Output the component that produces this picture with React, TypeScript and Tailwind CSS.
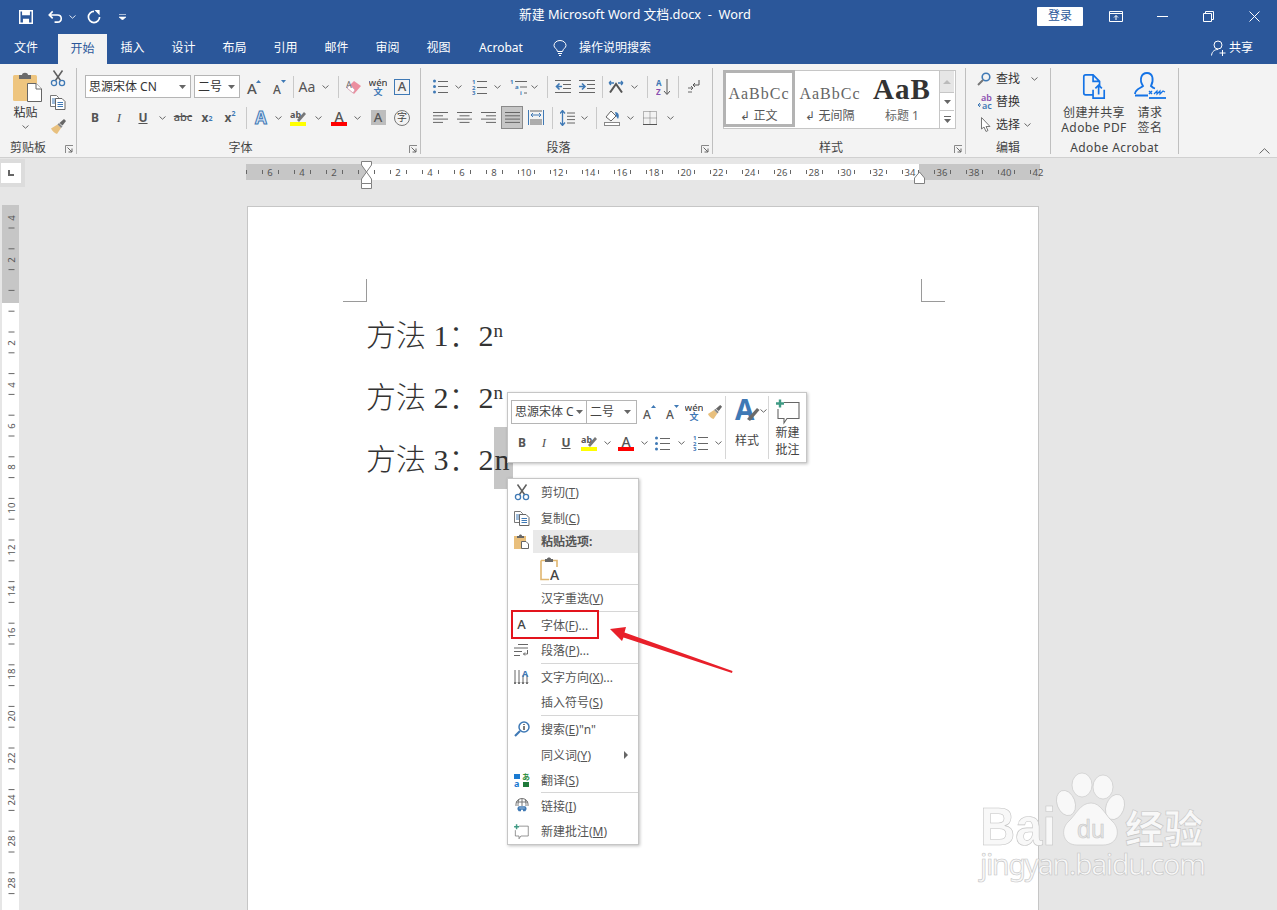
import type { ReactNode } from "react";

const GRAY = "#5f5f5f";
const BLUE = "#3f79b5";

function S({ c, children }: { c: string; children?: ReactNode }) {
  return <div className={`flex h-full shrink-0 items-center justify-center ${c}`}>{children}</div>;
}

function Sep({ c = "" }: { c?: string }) {
  return <div className={`h-[22px] w-px shrink-0 bg-[#c9c9c9] ${c}`} />;
}

function Chev({ color = "#666" }: { color?: string }) {
  return (
    <svg width="7" height="4" viewBox="0 0 7 4" className="shrink-0">
      <path d="M0.5 0.5 L3.5 3.2 L6.5 0.5" fill="none" stroke={color} />
    </svg>
  );
}

function Caret() {
  return (
    <svg width="7" height="4" viewBox="0 0 7 4" className="shrink-0">
      <path d="M0 0 H7 L3.5 4 Z" fill="#666" />
    </svg>
  );
}

function FontBox({ c, label }: { c: string; label: string }) {
  return (
    <div className={`flex shrink-0 items-center justify-between overflow-hidden border border-[#b5b5b5] bg-white pl-[3px] pr-[4px] text-[12px] text-[#333] ${c}`}>
      <span className="overflow-hidden whitespace-nowrap">{label}</span>
      <Caret />
    </div>
  );
}

function Scissors() {
  return (
    <svg width="16" height="17" viewBox="0 0 16 17" className="shrink-0">
      <path d="M3.5 0.5 L10.5 10.5 M12.5 0.5 L5.5 10.5" stroke={GRAY} strokeWidth="1.5" fill="none" />
      <circle cx="4" cy="13" r="2.6" fill="none" stroke={BLUE} strokeWidth="1.3" />
      <circle cx="12" cy="13" r="2.6" fill="none" stroke={BLUE} strokeWidth="1.3" />
    </svg>
  );
}

function CopyIcon() {
  return (
    <svg width="16" height="15" viewBox="0 0 16 15" className="shrink-0">
      <path d="M0.5 0.5 H6.5 L8.5 2.5 V11.5 H0.5 Z" fill="#fff" stroke="#777" />
      <path d="M2 4 H6 M2 6 H5 M2 8 H5" stroke={BLUE} />
      <path d="M5.5 3.5 H12 L15 6.5 V14.5 H5.5 Z" fill="#fff" stroke="#666" />
      <path d="M7.5 7.5 H13 M7.5 9.5 H13 M7.5 11.5 H13" stroke={BLUE} />
    </svg>
  );
}

function Brush({ size = 17 }: { size?: number }) {
  return (
    <svg width={size} height={size} viewBox="0 0 17 17" className="shrink-0">
      <path d="M1 10.5 L7.5 6.5 L11 10 L7 16 C5 15.5 2 13 1 10.5 Z" fill="#e8c07e" />
      <path d="M7.5 6.5 L9 5 L12.5 8.5 L11 10 Z" fill="#888" />
      <path d="M9.5 5 L14 1 L16 3 L12.5 7.5 Z" fill="#666" />
    </svg>
  );
}

function PasteBig() {
  return (
    <svg width="29" height="30" viewBox="0 0 29 30" className="ml-[3px] shrink-0">
      <rect x="0" y="3" width="24" height="26" rx="1.5" fill="#eec57f" />
      <path d="M6 3 H9 C9 0 15 0 15 3 H18 V7 H6 Z" fill="#6b6b6b" />
      <path d="M14.5 11.5 H23 L28.5 17 V29.5 H14.5 Z" fill="#fff" stroke="#666" />
      <path d="M23 11.5 V17 H28.5" fill="#fff" stroke="#666" />
    </svg>
  );
}

function WenIcon() {
  return (
    <svg width="18" height="18" viewBox="0 0 18 18" className="shrink-0">
      <text x="9" y="7.5" textAnchor="middle" fontSize="9.5" fontWeight="500" fill="#444" fontFamily="Noto Sans">wén</text>
      <text x="9" y="17" textAnchor="middle" fontSize="9" fontWeight="700" fill={BLUE} fontFamily="Noto Sans CJK SC">文</text>
    </svg>
  );
}

function GrowA({ up, big }: { up: boolean; big: boolean }) {
  return (
    <svg width="16" height="16" viewBox="0 0 16 16" className="shrink-0">
      <text x="6" y="15" textAnchor="middle" fontSize={big ? 15 : 12} fontWeight="500" fill="#555" fontFamily="Noto Sans">A</text>
      <path d={up ? "M10 4 L12.5 1 L15 4 Z" : "M10 1 H15 L12.5 4 Z"} fill={BLUE} />
    </svg>
  );
}

function Highlight() {
  return (
    <svg width="17" height="16" viewBox="0 0 17 16" className="shrink-0">
      <text x="0" y="8" fontSize="9" fontWeight="700" fill="#555" fontFamily="Noto Sans">ab</text>
      <path d="M7 10 L14 2 L16 4 L9 12 Z" fill="#777" />
      <rect x="0" y="12" width="16" height="4" fill="#ffff00" />
    </svg>
  );
}

function FontColor() {
  return (
    <svg width="16" height="16" viewBox="0 0 16 16" className="shrink-0">
      <text x="8" y="12" textAnchor="middle" fontSize="14" fontWeight="500" fill="#555" fontFamily="Noto Sans">A</text>
      <rect x="0" y="12" width="16" height="4" fill="#ff0000" />
    </svg>
  );
}

function Lines({ rows, x = 0, w = 15 }: { rows: number[]; x?: number; w?: number }) {
  return <path d={rows.map((y) => `M${x} ${y} H${x + w}`).join(" ")} stroke="#666" />;
}

function Bullets() {
  return (
    <svg width="15" height="15" viewBox="0 0 15 15" className="shrink-0">
      <circle cx="1.5" cy="2" r="1.5" fill={BLUE} />
      <circle cx="1.5" cy="7.5" r="1.5" fill={BLUE} />
      <circle cx="1.5" cy="13" r="1.5" fill={BLUE} />
      <Lines rows={[2.5, 7.5, 13.5]} x={5} w={10} />
    </svg>
  );
}

function Numbers() {
  return (
    <svg width="15" height="16" viewBox="0 0 15 16" className="shrink-0">
      <text x="0" y="5" fontSize="6" fontWeight="700" fill={BLUE} fontFamily="Noto Sans">1</text>
      <text x="0" y="10.5" fontSize="6" fontWeight="700" fill={BLUE} fontFamily="Noto Sans">2</text>
      <text x="0" y="16" fontSize="6" fontWeight="700" fill={BLUE} fontFamily="Noto Sans">3</text>
      <Lines rows={[2.5, 8.5, 14.5]} x={5} w={10} />
    </svg>
  );
}

function MultiLevel() {
  return (
    <svg width="17" height="16" viewBox="0 0 17 16" className="shrink-0">
      <text x="0" y="5" fontSize="6" fontWeight="700" fill={BLUE} fontFamily="Noto Sans">1</text>
      <text x="5" y="10" fontSize="6" fontWeight="700" fill={BLUE} fontFamily="Noto Sans">a</text>
      <text x="10" y="16" fontSize="6" fontWeight="700" fill={BLUE} fontFamily="Noto Sans">i</text>
      <path d="M5 2.5 H17 M10 8 H17 M14 14 H17" stroke="#666" />
    </svg>
  );
}

function Indent({ rtl }: { rtl: boolean }) {
  return (
    <svg width="16" height="13" viewBox="0 0 16 13" className="shrink-0">
      <path d="M0 0.5 H16 M8 4.5 H16 M8 8.5 H16 M0 12.5 H16" stroke="#666" />
      <path d={rtl ? "M7 6.5 H2 M4.5 3.5 L1.5 6.5 L4.5 9.5" : "M0 6.5 H5 M3 3.5 L6 6.5 L3 9.5"} stroke={BLUE} strokeWidth="1.6" fill="none" />
    </svg>
  );
}

function Align({ rows }: { rows: [number, number][] }) {
  return (
    <svg width="15" height="11" viewBox="0 0 15 11" className="shrink-0">
      {rows.map(([x, w], i) => (
        <path key={i} d={`M${x} ${i * 3.3 + 0.5} H${x + w}`} stroke="#666" />
      ))}
    </svg>
  );
}

function Comment({ w = 24, h = 26 }: { w?: number; h?: number }) {
  return (
    <svg width={w} height={h} viewBox="0 0 24 26" className="shrink-0">
      <path d="M8 3.5 H23 V19.5 H11 L8 24 V19.5 H2 V10" fill="none" stroke="#666" strokeWidth="1.1" />
      <path d="M0 4.5 H8 M4 0.5 V8.5" stroke="#3f9a84" strokeWidth="2.4" />
    </svg>
  );
}

function Launcher() {
  return (
    <svg width="8" height="8" viewBox="0 0 8 8" className="absolute bottom-[1px] right-[3px]">
      <path d="M0.5 8 V0.5 H8" fill="none" stroke="#888" />
      <path d="M2.5 2.5 L7 7 M7 3.5 V7 H3.5" fill="none" stroke="#666" />
    </svg>
  );
}

function Group({ c, label, launcher, children, labelPad = "pr-[16px]" }: { c: string; label: string; launcher?: boolean; children: ReactNode; labelPad?: string }) {
  return (
    <div className={`relative mt-1 h-[86px] shrink-0 border-r border-[#bfbfbf] ${c}`}>
      <div className="flow-root h-[71px]">{children}</div>
      <div className={`mt-px h-[15px] whitespace-nowrap text-center text-[12px] leading-[15px] text-[#444] ${labelPad}`}>{label}</div>
      {launcher && <Launcher />}
    </div>
  );
}

function TitleBar() {
  return (
    <div className="flex h-8 items-center text-white">
      <div className="flex w-[519px] shrink-0 items-center pt-[2px]">
        <svg width="14" height="14" viewBox="0 0 16 16" className="ml-[19px] shrink-0">
          <path d="M0.8 0.8 H15.2 V15.2 H0.8 Z" fill="none" stroke="#fff" strokeWidth="1.8" />
          <path d="M3.5 1 H12.5 V6 H3.5 Z M4.5 10 H11.5 V15 H4.5 Z" fill="#fff" />
        </svg>
        <svg width="15" height="14" viewBox="0 0 16 14" className="ml-[15px] shrink-0">
          <path d="M5 1 L1.3 4.8 L5 8.5 M1.5 4.8 H10 C15.5 4.8 15.5 12.5 10 12.5 H7" fill="none" stroke="#fff" strokeWidth="1.7" />
        </svg>
        <span className="ml-[6px]"><Chev color="#dfe7f3" /></span>
        <svg width="14" height="14" viewBox="0 0 15 15" className="ml-[11px] shrink-0">
          <path d="M7.5 1.5 A6 6 0 1 0 13.5 7.5" fill="none" stroke="#fff" strokeWidth="1.8" />
          <path d="M8 0 H13.5 V5.5 Z" fill="#fff" />
        </svg>
        <svg width="7" height="6" viewBox="0 0 7 6" className="ml-[18px] shrink-0">
          <path d="M0 0.5 H7 M0 3 H7 L3.5 6 Z" fill="#fff" stroke="#fff" strokeWidth="0.6" />
        </svg>
      </div>
      <div className="whitespace-nowrap pb-[2px] text-[12.8px]">新建 Microsoft Word 文档.docx&nbsp; -&nbsp; Word</div>
      <div className="ml-auto flex items-center">
        <div className="flex h-[19px] w-[46px] items-center justify-center rounded-[1px] bg-white text-[12px] text-[#2b579a]">登录</div>
        <svg width="14" height="11" viewBox="0 0 14 11" className="ml-[26px] shrink-0">
          <path d="M0.5 0.5 H13.5 V10.5 H0.5 Z M0.5 2.5 H13.5 M7 9 V4.5 M5 6.5 L7 4.5 L9 6.5" fill="none" stroke="#fff" />
        </svg>
        <div className="ml-[34px] h-px w-[11px] bg-white" />
        <svg width="11" height="11" viewBox="0 0 11 11" className="ml-[35px] shrink-0">
          <path d="M0.5 2.5 H8.5 V10.5 H0.5 Z M2.5 2.5 V0.5 H10.5 V8.5 H8.5" fill="none" stroke="#fff" />
        </svg>
        <svg width="11" height="11" viewBox="0 0 11 11" className="ml-[35px] mr-[17px] shrink-0">
          <path d="M0.5 0.5 L10.5 10.5 M10.5 0.5 L0.5 10.5" stroke="#fff" />
        </svg>
      </div>
    </div>
  );
}

function TabBar() {
  const tabs = ["插入", "设计", "布局", "引用", "邮件", "审阅", "视图"];
  return (
    <div className="flex h-8 items-center text-[12px] text-white">
      <div className="w-[52px] text-center">文件</div>
      <div className="ml-[6px] mt-[2px] flex h-[30px] w-[49px] items-center justify-center bg-[#f3f3f3] text-[#2b579a]">开始</div>
      {tabs.map((t) => (
        <div key={t} className="w-[51px] text-center">{t}</div>
      ))}
      <div className="w-[74px] text-center">Acrobat</div>
      <svg width="14" height="16" viewBox="0 0 14 16" className="ml-[15px] shrink-0">
        <path d="M4.5 11.5 C4 8.5 1 8 1 5.5 A6 5 0 0 1 13 5.5 C13 8 10 8.5 9.5 11.5 Z M5 13.5 H9 M6 15.5 H8" fill="none" stroke="#fff" />
      </svg>
      <div className="ml-[12px]">操作说明搜索</div>
      <div className="ml-auto mr-[24px] flex items-center">
        <svg width="16" height="16" viewBox="0 0 16 16" className="shrink-0">
          <circle cx="7" cy="5" r="4" fill="none" stroke="#fff" />
          <path d="M0.5 15.5 C1 11 4 9.5 7 9.5 M11.5 10 V16 M8.5 13 H14.5" fill="none" stroke="#fff" />
        </svg>
        <span className="ml-[2px]">共享</span>
      </div>
    </div>
  );
}

function ClipboardGroup() {
  return (
    <Group c="w-[77px]" label="剪贴板" launcher labelPad="pr-[20px]">
      <div className="flex">
        <div className="flex w-[51px] flex-col items-center pt-[4px]">
          <PasteBig />
          <span className="mt-[3px] text-[12px] leading-[15px] text-[#333]">粘贴</span>
          <span className="mt-[5px]"><Chev /></span>
        </div>
        <div className="flex w-[14px] flex-col items-center gap-[8px] pt-[2px]">
          <Scissors />
          <CopyIcon />
          <Brush />
        </div>
      </div>
    </Group>
  );
}

function FontGroup() {
  return (
    <Group c="w-[344px]" label="字体" launcher>
      <div className="pl-[8px] pt-[7px]">
        <div className="flex h-[23px] items-center">
          <FontBox c="h-[23px] w-[106px]" label="思源宋体 CN" />
          <FontBox c="ml-[3px] h-[23px] w-[46px]" label="二号" />
          <S c="w-[27px]"><GrowA up big /></S>
          <S c="w-[24px]"><GrowA up={false} big={false} /></S>
          <Sep c="ml-[2px]" />
          <S c="w-[26px] text-[14px] text-[#555]">Aa</S>
          <S c="w-[11px]"><Chev /></S>
          <Sep c="ml-[7px]" />
          <S c="w-[30px]">
            <svg width="16" height="16" viewBox="0 0 16 16" className="shrink-0">
              <path d="M1 9 L8 2 L15 7 L8 15 Z" fill="#ec8e9f" />
              <path d="M1 9 L4 5.5 L9 11 L7 14 Z" fill="#fff" stroke="#c9a" strokeWidth="0.7" />
              <text x="0" y="9" fontSize="9" fill="#666" fontFamily="Noto Sans">A</text>
            </svg>
          </S>
          <S c="w-[18px]"><WenIcon /></S>
          <S c="w-[30px]">
            <div className="flex h-[16px] w-[16px] items-center justify-center border border-[#3f79b5] text-[13px] font-medium text-[#555]">A</div>
          </S>
        </div>
        <div className="mt-[8px] flex h-[23px] items-center text-[#555]">
          <S c="w-[20px] text-[12px] font-bold">B</S>
          <S c="w-[28px] font-['Liberation_Serif',serif] text-[13px] italic">I</S>
          <S c="w-[20px] text-[12px] font-bold underline">U</S>
          <S c="w-[18px]"><Chev /></S>
          <S c="w-[24px] text-[11px] font-medium line-through">abc</S>
          <S c="w-[24px] text-[12px] font-bold">x<sub className="text-[7px] text-[#3f79b5]">2</sub></S>
          <S c="w-[22px] text-[12px] font-bold">x<sup className="text-[7px] text-[#3f79b5]">2</sup></S>
          <Sep c="ml-[5px]" />
          <S c="w-[28px] text-[17px] font-bold text-[#d4e3f4] [-webkit-text-stroke:1px_#3f79b5]">A</S>
          <S c="w-[6px]"><Chev /></S>
          <S c="w-[34px]"><Highlight /></S>
          <S c="w-[6px]"><Chev /></S>
          <S c="w-[33px] pl-[3px]"><FontColor /></S>
          <S c="w-[6px]"><Chev /></S>
          <S c="w-[36px]">
            <div className="flex h-[15px] w-[15px] items-center justify-center bg-[#bdbdbd] text-[13px] font-medium text-[#555]">A</div>
          </S>
          <S c="w-[12px]">
            <div className="flex h-[16px] w-[16px] shrink-0 items-center justify-center rounded-full border border-[#777] text-[10px] text-[#444]">字</div>
          </S>
        </div>
      </div>
    </Group>
  );
}

function ParagraphGroup() {
  return (
    <Group c="w-[292px]" label="段落" launcher>
      <div className="pl-[10px] pt-[7px]">
        <div className="flex h-[23px] items-center">
          <S c="w-[18px]"><Bullets /></S>
          <S c="w-[18px]"><Chev /></S>
          <S c="w-[24px]"><Numbers /></S>
          <S c="w-[12px]"><Chev /></S>
          <S c="w-[25px] pl-[5px]"><MultiLevel /></S>
          <S c="w-[12px]"><Chev /></S>
          <Sep c="ml-[7px]" />
          <S c="w-[30px]"><Indent rtl /></S>
          <S c="w-[18px]"><Indent rtl={false} /></S>
          <Sep c="ml-[6px]" />
          <S c="w-[26px]">
            <svg width="16" height="13" viewBox="0 0 16 13" className="shrink-0">
              <path d="M2 12.5 L8 4 L14 12.5" fill="none" stroke="#555" strokeWidth="2" />
              <path d="M1 3 H6 M1 3 L3 1 M1 3 L3 5 M15 3 H10 M15 3 L13 1 M15 3 L13 5" fill="none" stroke={BLUE} strokeWidth="1.3" />
            </svg>
          </S>
          <S c="w-[10px]"><Chev /></S>
          <Sep c="ml-[8px]" />
          <S c="w-[30px]">
            <svg width="14" height="16" viewBox="0 0 14 16" className="shrink-0">
              <text x="0" y="7" fontSize="8" fontWeight="700" fill={BLUE} fontFamily="Noto Sans">A</text>
              <text x="0" y="15.5" fontSize="8" fontWeight="700" fill="#8a4fb0" fontFamily="Noto Sans">Z</text>
              <path d="M11 0 V15 M8 12 L11 15.5 L14 12" fill="none" stroke="#555" />
            </svg>
          </S>
          <Sep />
          <S c="w-[30px]">
            <svg width="12" height="13" viewBox="0 0 12 13" className="shrink-0">
              <path d="M11 0 V5 H5 M7 3 L5 5 L7 7" fill="none" stroke="#555" />
              <path d="M0 8 H5 M3 6 L5 8 L3 10 M0 12 H4" fill="none" stroke="#666" />
            </svg>
          </S>
        </div>
        <div className="mt-[8px] flex h-[23px] items-center">
          <S c="w-[18px]"><Align rows={[[0, 15], [0, 10], [0, 15], [0, 10]]} /></S>
          <S c="w-[30px]"><Align rows={[[0, 15], [2.5, 10], [0, 15], [2.5, 10]]} /></S>
          <S c="w-[18px]"><Align rows={[[0, 15], [5, 10], [0, 15], [5, 10]]} /></S>
          <S c="ml-[4px] w-[22px] border border-[#8a8a8a] bg-[#c6c6c6]"><Align rows={[[0, 15], [0, 15], [0, 15], [0, 15]]} /></S>
          <S c="ml-[5px] w-[16px]">
            <svg width="16" height="15" viewBox="0 0 16 15" className="shrink-0">
              <path d="M0.5 0 V15 M15.5 0 V15" stroke={BLUE} />
              <path d="M2 1 H14 M2 10 H14 M2 12 H14 M2 14 H14" stroke="#666" />
              <path d="M3 5 H13 M5 3 L3 5 L5 7 M11 3 L13 5 L11 7" fill="none" stroke={BLUE} />
            </svg>
          </S>
          <Sep c="ml-[8px]" />
          <S c="w-[28px]">
            <svg width="15" height="16" viewBox="0 0 15 16" className="shrink-0">
              <path d="M2.5 1 V15 M0 3.5 L2.5 0.5 L5 3.5 M0 12.5 L2.5 15.5 L5 12.5" fill="none" stroke={BLUE} strokeWidth="1.3" />
              <path d="M7 3 H15 M7 6.3 H15 M7 9.6 H15 M7 13 H15" stroke="#666" />
            </svg>
          </S>
          <S c="w-[6px]"><Chev /></S>
          <Sep c="ml-[9px]" />
          <S c="w-[30px]">
            <svg width="17" height="16" viewBox="0 0 17 16" className="shrink-0">
              <path d="M2 7 L7 1 L12 6 L7 11 Z" fill="#fff" stroke="#666" />
              <path d="M11 2 C15 2 15.5 6 14 9 L12 6 Z" fill={BLUE} />
              <rect x="0.5" y="12.5" width="15" height="3" fill="#fff" stroke="#888" />
            </svg>
          </S>
          <S c="w-[6px]"><Chev /></S>
          <S c="w-[34px]">
            <svg width="14" height="14" viewBox="0 0 14 14" className="shrink-0">
              <path d="M0.5 0.5 H13.5 V13.5 H0.5 Z M7 0.5 V13.5 M0.5 7 H13.5" fill="none" stroke="#777" strokeDasharray="1 1" />
              <path d="M0 13.5 H14" stroke="#555" />
            </svg>
          </S>
          <S c="w-[6px]"><Chev /></S>
        </div>
      </div>
    </Group>
  );
}

function StyleCard({ c, top, sample, label }: { c: string; top: string; sample: ReactNode; label: ReactNode }) {
  return (
    <div className={`flex h-full flex-col items-center overflow-hidden bg-white ${c}`}>
      <div className={`flex w-full items-center justify-center overflow-hidden whitespace-nowrap ${top}`}>{sample}</div>
      <div className="text-[12px] leading-[16px] text-[#555]">{label}</div>
    </div>
  );
}

function StylesGroup() {
  const sample = "font-['Liberation_Serif',serif] text-[16px] tracking-[1px] text-[#666]";
  return (
    <Group c="w-[253px]" label="样式" launcher>
      <div className="pl-[10px] pt-[2px]">
        <div className="flex h-[59px] w-[233px] border border-[#c6c6c6] bg-white">
          <StyleCard c="-my-px -ml-px w-[72px] border-[3px] border-[#b3b3b3]" top="h-[35px] pt-[6px]" sample={<span className={sample}>AaBbCc</span>} label="↲ 正文" />
          <StyleCard c="w-[70px]" top="h-[37px] pt-[8px]" sample={<span className={sample}>AaBbCc</span>} label="↲ 无间隔" />
          <StyleCard c="w-[74px]" top="h-[37px]" sample={<span className="font-['Liberation_Serif',serif] text-[29px] font-bold leading-none tracking-[1px] text-[#333]">AaB</span>} label={<span className="text-[#666]">标题 1</span>} />
          <div className="flex w-[15px] flex-col border-l border-[#c6c6c6]">
            <div className="flex h-[21px] items-center justify-center bg-[#e6e6e6]"><span className="h-0 w-0 border-x-[4px] border-b-[4px] border-x-transparent border-b-[#bbb]" /></div>
            <div className="flex h-[19px] items-center justify-center border-y border-[#c6c6c6]"><Caret /></div>
            <div className="flex flex-1 flex-col items-center justify-center gap-[2px]"><span className="h-px w-[7px] bg-[#666]" /><Caret /></div>
          </div>
        </div>
      </div>
    </Group>
  );
}

function EditGroup() {
  return (
    <Group c="w-[85px]" label="编辑" labelPad="">
      <div className="-mt-px pl-[11px] text-[12px] text-[#333]">
        <div className="flex h-[23px] items-center">
          <svg width="14" height="14" viewBox="0 0 14 14" className="shrink-0">
            <circle cx="9" cy="5" r="3.8" fill="none" stroke={BLUE} strokeWidth="1.6" />
            <path d="M6 8 L1 13" stroke="#777" strokeWidth="2" />
          </svg>
          <span className="ml-[5px]">查找</span>
          <span className="ml-[11px]"><Chev /></span>
        </div>
        <div className="flex h-[23px] items-center">
          <svg width="16" height="15" viewBox="0 0 16 15" className="shrink-0">
            <text x="4" y="7" fontSize="9" fontWeight="600" fill="#8a4fb0" fontFamily="Noto Sans">ab</text>
            <text x="5" y="15" fontSize="9" fontWeight="600" fill={BLUE} fontFamily="Noto Sans">ac</text>
            <path d="M3 9 L1 11 L3 13 M1 11 H4" fill="none" stroke={BLUE} />
          </svg>
          <span className="ml-[3px]">替换</span>
        </div>
        <div className="flex h-[23px] items-center">
          <svg width="10" height="15" viewBox="0 0 10 15" className="ml-[4px] shrink-0">
            <path d="M0.5 0.5 V12 L3 10 L5 14.5 L7 13.5 L5 9.5 H9 Z" fill="#fff" stroke="#777" />
          </svg>
          <span className="ml-[5px]">选择</span>
          <span className="ml-[4px]"><Chev /></span>
        </div>
      </div>
    </Group>
  );
}

function AcrobatGroup() {
  return (
    <Group c="w-[128px] tracking-[0.4px]" label="Adobe Acrobat" labelPad="">
      <div className="flex pt-[4px] text-center text-[12px] leading-[15px] text-[#444]">
        <div className="flex w-[86px] flex-col items-center">
          <svg width="24" height="28" viewBox="0 0 24 28" className="mt-[2px] h-[26px] shrink-0">
            <path d="M11 22.5 H3 C1.5 22.5 1 22 1 20.5 V3 C1 1.5 1.5 1 3 1 H11 L18 8 V13 M11 1 V8 H18" fill="none" stroke="#1473e6" strokeWidth="1.8" />
            <path d="M11 17 V26 H23 V17 M17 22 V12.5 M13.5 15.5 L17 12 L20.5 15.5" fill="none" stroke="#1473e6" strokeWidth="1.8" />
          </svg>
          <div className="mt-[5px] whitespace-nowrap">创建并共享</div>
          <div className="whitespace-nowrap">Adobe PDF</div>
        </div>
        <div className="flex w-[26px] flex-col items-center">
          <svg width="32" height="28" viewBox="0 0 32 28" className="shrink-0">
            <path d="M1 22 C1 17 7 16 9 14 C5 8 7 1 13 1 C19 1 20 8 17 14 C18 15 19 16 21 16.5 M1 23.5 H14" fill="none" stroke="#1473e6" strokeWidth="1.8" />
            <path d="M15 19 L18 22 M18 19 L15 22" stroke="#1473e6" strokeWidth="1.4" />
            <path d="M20 22 L23 19 V22 L26 19 V22 L29 19 L31 20" fill="none" stroke="#1473e6" strokeWidth="1.2" />
            <path d="M15 26 H32" stroke="#1473e6" strokeWidth="1.8" />
          </svg>
          <div className="mt-[5px] whitespace-nowrap">请求</div>
          <div className="whitespace-nowrap">签名</div>
        </div>
      </div>
    </Group>
  );
}

function Ribbon() {
  return (
    <div className="flex h-[94px] border-b border-[#d0d0d0] bg-[#f3f3f3]">
      <ClipboardGroup />
      <FontGroup />
      <ParagraphGroup />
      <StylesGroup />
      <EditGroup />
      <AcrobatGroup />
      <div className="flex flex-1 items-end justify-end pb-[3px] pr-[7px]">
        <svg width="11" height="6" viewBox="0 0 11 6"><path d="M0.5 5.5 L5.5 0.7 L10.5 5.5" fill="none" stroke="#666" /></svg>
      </div>
    </div>
  );
}

function HRuler() {
  const ticks = Array.from({ length: 50 }, (_, i) => 4 + i * 16);
  const nums: [number, string][] = [];
  for (let n = -6; n <= 42; n += 2) {
    if (n !== 0) nums.push([120 + n * 16, String(Math.abs(n))]);
  }
  return (
    <svg width="800" height="32" viewBox="0 0 800 32" className="ml-[221px] mt-[1px] shrink-0">
      <rect x="0" y="5" width="794" height="16" fill="#c6c6c6" />
      <rect x="120" y="5" width="553" height="16" fill="#fff" />
      {ticks.map((x) => (
        <path key={x} d={`M${x - 3.5} 11 V15`} stroke="#666" />
      ))}
      {nums.map(([x, t]) => (
        <text key={x} x={x} y="17" textAnchor="middle" fontSize="9.5" fill="#555" fontFamily="Noto Sans">{t}</text>
      ))}
      <path d="M115.5 2.5 H125.5 V6 L120.5 13 L115.5 6 Z M120.5 13 L125.5 20 V24.5 H115.5 V20 Z M115.5 24.5 V29.5 H125.5 V24.5" fill="#fff" stroke="#808080" />
      <path d="M668.5 24.5 V19 L673.5 13 L678.5 19 V24.5 Z" fill="#fff" stroke="#808080" />
    </svg>
  );
}

function VRuler() {
  const ticks = Array.from({ length: 34 }, (_, i) => 23 + i * 20.8);
  const nums: [number, string][] = [
    [13, "4"], [55, "2"], [138, "2"], [180, "4"], [221, "6"], [262, "8"], [303, "10"], [345, "12"],
    [386, "14"], [428, "16"], [469, "18"], [511, "20"], [553, "22"], [595, "24"], [636, "28"], [678, "28"],
  ];
  return (
    <svg width="17" height="705" viewBox="0 0 17 705" className="ml-[2px] shrink-0">
      <rect width="17" height="705" fill="#fff" />
      <rect width="17" height="98" fill="#c6c6c6" />
      {ticks.map((y) => (
        <path key={y} d={`M6.5 ${y} H12.5`} stroke="#666" />
      ))}
      {nums.map(([y, t]) => (
        <text key={y} x="12.5" y={y} textAnchor="middle" fontSize="9.5" fill="#555" fontFamily="Noto Sans" transform={`rotate(-90 12.5 ${y})`}>{t}</text>
      ))}
    </svg>
  );
}

function DocLine({ n, last }: { n: number; last?: boolean }) {
  return (
    <div className="flex h-[62px] items-center whitespace-nowrap font-['Liberation_Serif','Noto_Sans_CJK_SC',serif] text-[30px] font-light text-[#333]">
      <span className="pt-[2px]">方法 {n}：</span>
      <span className="pt-[2px]">2</span>
      {last ? (
        <span className="flex h-[62px] w-[19px] items-center bg-[#c6c6c6] pl-[1px] pt-[2px]">n</span>
      ) : (
        <sup className="top-[-3px] text-[19px]">n</sup>
      )}
    </div>
  );
}

function Page() {
  return (
    <div className="relative ml-[228px] mt-[1px] h-[720px] w-[792px] shrink-0 border border-[#c6c6c6] bg-white pl-[118px] pt-[96px]">
      <div className="absolute left-[95px] top-[72px] h-[23px] w-[24px] border-b border-r border-[#9a9a9a]" />
      <div className="absolute left-[673px] top-[72px] h-[23px] w-[24px] border-b border-l border-[#9a9a9a]" />
      <DocLine n={1} />
      <DocLine n={2} />
      <DocLine n={3} last />
    </div>
  );
}

function MiniToolbar() {
  return (
    <div className="absolute left-[507px] top-[392px] flex h-[71px] w-[300px] border border-[#c6c6c6] bg-white text-[12px] text-[#444] shadow-[1px_1px_3px_rgba(0,0,0,0.25)]">
      <div className="w-[217px] shrink-0 pl-[3px] pt-[7px]">
        <div className="flex h-[24px] items-center">
          <div className="flex h-[24px] w-[76px] items-center justify-between overflow-hidden border border-[#b5b5b5] pl-[3px] pr-[3px]">
            <span className="w-[60px] overflow-hidden whitespace-nowrap">思源宋体 C</span>
            <Caret />
          </div>
          <div className="flex h-[24px] w-[50px] items-center justify-between border border-l-0 border-[#b5b5b5] pl-[3px] pr-[5px]">
            <span>二号</span>
            <Caret />
          </div>
          <S c="w-[23px]"><GrowA up big={false} /></S>
          <S c="w-[23px]"><GrowA up={false} big={false} /></S>
          <S c="w-[21px]"><WenIcon /></S>
          <S c="w-[21px]"><Brush size={16} /></S>
        </div>
        <div className="mt-[7px] flex h-[24px] items-center text-[#555]">
          <S c="w-[22px] text-[12px] font-bold">B</S>
          <S c="w-[22px] font-['Liberation_Serif',serif] text-[13px] italic">I</S>
          <S c="w-[22px] text-[12px] font-bold underline">U</S>
          <S c="w-[24px]"><Highlight /></S>
          <S c="w-[12px]"><Chev /></S>
          <S c="w-[26px]"><FontColor /></S>
          <S c="w-[10px]"><Chev /></S>
          <S c="w-[26px]"><Bullets /></S>
          <S c="w-[12px]"><Chev /></S>
          <S c="w-[26px]"><Numbers /></S>
          <S c="w-[10px]"><Chev /></S>
        </div>
      </div>
      <div className="my-[3px] w-px bg-[#d6d6d6]" />
      <div className="flex w-[42px] shrink-0 flex-col items-center pt-[5px]">
        <div className="flex items-center">
          <svg width="32" height="25" viewBox="0 0 32 25" className="shrink-0">
            <text x="7" y="22" fontSize="28" fontWeight="700" fill="#3f79b5" fontFamily="Noto Sans">A</text>
            <path d="M19 21 L29 10 L31.5 12 L22 23 Z" fill="#6b6b6b" />
          </svg>
          <Chev />
        </div>
        <span className="mt-[9px]">样式</span>
      </div>
      <div className="my-[3px] w-px bg-[#d6d6d6]" />
      <div className="flex flex-1 flex-col items-center pt-[6px] leading-[17px]">
        <Comment />
        <span className="mt-[-1px]">新建</span>
        <span>批注</span>
      </div>
    </div>
  );
}

function MenuRow({ c = "h-[26px]", icon, children, arrow }: { c?: string; icon?: ReactNode; children: ReactNode; arrow?: boolean }) {
  return (
    <div className={`flex items-center ${c}`}>
      <div className="flex w-[33px] shrink-0 justify-center pr-[6px]">{icon}</div>
      <div className="whitespace-nowrap pt-px">{children}</div>
      {arrow && <span className="ml-auto mr-[10px] h-0 w-0 border-y-[4px] border-l-[4px] border-y-transparent border-l-[#666]" />}
    </div>
  );
}

function MenuSep() {
  return <div className="ml-[33px] h-px bg-[#d6d6d6]" />;
}

function ContextMenu() {
  return (
    <div className="absolute left-[507px] top-[478px] w-[132px] border border-[#c6c6c6] bg-white text-[12px] text-[#555] shadow-[1px_1px_3px_rgba(0,0,0,0.25)]">
      <MenuRow c="h-[27px]" icon={<Scissors />}>剪切(<u>T</u>)</MenuRow>
      <MenuRow c="h-[24px]" icon={<CopyIcon />}>复制(<u>C</u>)</MenuRow>
      <div className="flex h-[23px] items-center">
        <div className="flex w-[25px] shrink-0 justify-center pl-[1px]">
          <svg width="15" height="15" viewBox="0 0 15 15" className="shrink-0">
            <rect x="0" y="2" width="12" height="13" fill="#e9bf7c" />
            <path d="M3 2 H5 C5 0 8 0 8 2 H10 V4 H3 Z" fill="#666" />
            <path d="M7.5 7.5 H12 L14.5 10 V14.5 H7.5 Z" fill="#fff" stroke="#666" />
          </svg>
        </div>
        <div className="flex h-full flex-1 items-center bg-[#e9e9e9] pl-[8px] font-bold">粘贴选项:</div>
      </div>
      <div className="flex h-[31px] items-center pl-[32px]">
        <svg width="22" height="24" viewBox="0 0 22 24" className="shrink-0">
          <path d="M1 3.5 H17 V10 M9 22.5 H1 V3.5" fill="none" stroke="#e0b66f" strokeWidth="1.6" />
          <path d="M5 2 H7 C7 0 11 0 11 2 H13 V5 H5 Z" fill="#666" />
          <text x="10" y="23" fontSize="14" fontWeight="500" fill="#444" fontFamily="Noto Sans">A</text>
        </svg>
      </div>
      <MenuSep />
      <MenuRow>汉字重选(<u>V</u>)</MenuRow>
      <MenuSep />
      <MenuRow icon={<span className="text-[13px] font-medium text-[#444]">A</span>}>字体(<u>F</u>)...</MenuRow>
      <MenuRow c="h-[25px]" icon={
        <svg width="15" height="13" viewBox="0 0 15 13" className="shrink-0">
          <path d="M4 0.5 H14 M0 4 H14 M0 7.5 H8 M0 11.5 H6" stroke="#666" />
          <path d="M13.5 6 V10 H9.5 M11 8.5 L9.5 10 L11 11.5" fill="none" stroke="#666" />
        </svg>
      }>段落(<u>P</u>)...</MenuRow>
      <MenuSep />
      <MenuRow icon={
        <svg width="16" height="16" viewBox="0 0 16 16" className="shrink-0">
          <path d="M1 1 V15 M5 1 V15 M9 6 V15 M13 6 V15" stroke="#666" />
          <path d="M0 13 L1 15 L2 13 M4 13 L5 15 L6 13 M8 13 L9 15 L10 13 M12 13 L13 15 L14 13" fill="none" stroke="#666" />
          <text x="8" y="7.5" fontSize="9" fontWeight="700" fill={BLUE} fontFamily="Noto Sans">A</text>
        </svg>
      }>文字方向(<u>X</u>)...</MenuRow>
      <MenuRow c="h-[25px]">插入符号(<u>S</u>)</MenuRow>
      <MenuSep />
      <MenuRow icon={
        <svg width="16" height="16" viewBox="0 0 16 16" className="shrink-0">
          <circle cx="10" cy="6" r="5" fill="#fff" stroke={BLUE} strokeWidth="1.5" />
          <path d="M10 5 V9 M10 3 V4" stroke="#444" strokeWidth="1.4" />
          <path d="M6 10 L1 15" stroke={BLUE} strokeWidth="2.2" />
        </svg>
      }>搜索(<u>E</u>)"n"</MenuRow>
      <MenuRow arrow>同义词(<u>Y</u>)</MenuRow>
      <MenuRow c="h-[24px]" icon={
        <svg width="16" height="16" viewBox="0 0 16 16" className="shrink-0">
          <text x="0" y="15" fontSize="9" fontWeight="700" fill="#1a7ad1" fontFamily="Noto Sans">a</text>
          <text x="8" y="8" fontSize="8" fontWeight="700" fill="#2f8f3f" fontFamily="Noto Sans CJK JP">あ</text>
          <path d="M0 2 H6 V7 H0 Z" fill="#1a7ad1" />
          <path d="M9 10 H15 V15 H9 Z" fill="#1f7a3a" />
        </svg>
      }>翻译(<u>S</u>)</MenuRow>
      <MenuSep />
      <MenuRow icon={
        <svg width="16" height="16" viewBox="0 0 16 16" className="shrink-0">
          <path d="M2 8 V6 A6 5.5 0 0 1 14 6 V8 M2 4 H14 M8 0.5 V8 M5 1 C4 4 4 6 4 8 M11 1 C12 4 12 6 12 8" fill="none" stroke="#777" />
          <path d="M7 12.5 H5 A2.5 2.5 0 0 1 5 9 H8 M9 12.5 H11 A2.5 2.5 0 0 0 11 9 H8 M4 11 H12" fill="none" stroke={BLUE} strokeWidth="1.4" />
        </svg>
      }>链接(<u>I</u>)</MenuRow>
      <MenuRow c="h-[25px]" icon={<Comment w={15} h={16} />}>新建批注(<u>M</u>)</MenuRow>
    </div>
  );
}

function Annotation() {
  return (
    <>
      <div className="absolute left-[511px] top-[610px] h-[29px] w-[88px] border-2 border-[#e3141d]" />
      <svg width="130" height="52" viewBox="0 0 130 52" className="absolute left-[606px] top-[625px]">
        <path d="M4 4 L20 2 L18.5 7.5 L126.5 46 L126 48 L17.5 12.5 L16 16 Z" fill="#e8202a" />
      </svg>
    </>
  );
}

function Watermark() {
  const t = { fill: "#f8f8f8", stroke: "#c4c4c4", strokeWidth: 0.6 };
  return (
    <svg width="240" height="120" viewBox="0 0 240 120" className="absolute left-[975px] top-[770px]">
      <text x="5" y="75" fontSize="53" fontWeight="700" fontFamily="Liberation Sans" textLength="76" lengthAdjust="spacingAndGlyphs" {...t}>Bai</text>
      <g {...t}>
        <ellipse cx="107" cy="15" rx="10" ry="12" />
        <ellipse cx="128" cy="17" rx="10" ry="12" />
        <ellipse cx="91" cy="33" rx="9" ry="13" transform="rotate(-20 91 33)" />
        <ellipse cx="140" cy="37" rx="9" ry="13" transform="rotate(20 140 37)" />
        <path d="M116 33 C126 33 130 45 138 52 C146 60 143 75 128 75 H102 C88 75 85 60 93 52 C101 45 105 33 116 33 Z" />
      </g>
      <text x="116" y="68" textAnchor="middle" fontSize="25" fontFamily="Liberation Sans" fill="#e4e4e4" stroke="#c4c4c4" strokeWidth="0.5">du</text>
      <text x="150" y="73" fontSize="39" fontWeight="700" fontFamily="Noto Sans CJK SC" {...t}>经验</text>
      <text x="5" y="105" fontSize="29" fontFamily="Noto Sans" textLength="226" {...t}>jingyan.baidu.com</text>
    </svg>
  );
}

export default function App() {
  return (
    <div className="relative h-[910px] w-[1277px] overflow-hidden bg-[#e6e6e6] font-['Noto_Sans','Noto_Sans_CJK_SC',sans-serif]">
      <div className="bg-[#2b579a]">
        <TitleBar />
        <TabBar />
      </div>
      <Ribbon />
      <div className="flex h-[47px] items-start">
        <div className="mt-[1px] flex h-[28px] w-[25px] shrink-0 bg-[#dcdcdc] pb-[4px] pl-[1px] pr-[4px] pt-[4px]">
          <div className="flex flex-1 items-center justify-center bg-white">
            <div className="h-[6px] w-[6px] border-b-2 border-l-2 border-[#666]" />
          </div>
        </div>
        <HRuler />
      </div>
      <div className="flex">
        <VRuler />
        <Page />
      </div>
      <MiniToolbar />
      <ContextMenu />
      <Annotation />
      <Watermark />
    </div>
  );
}
